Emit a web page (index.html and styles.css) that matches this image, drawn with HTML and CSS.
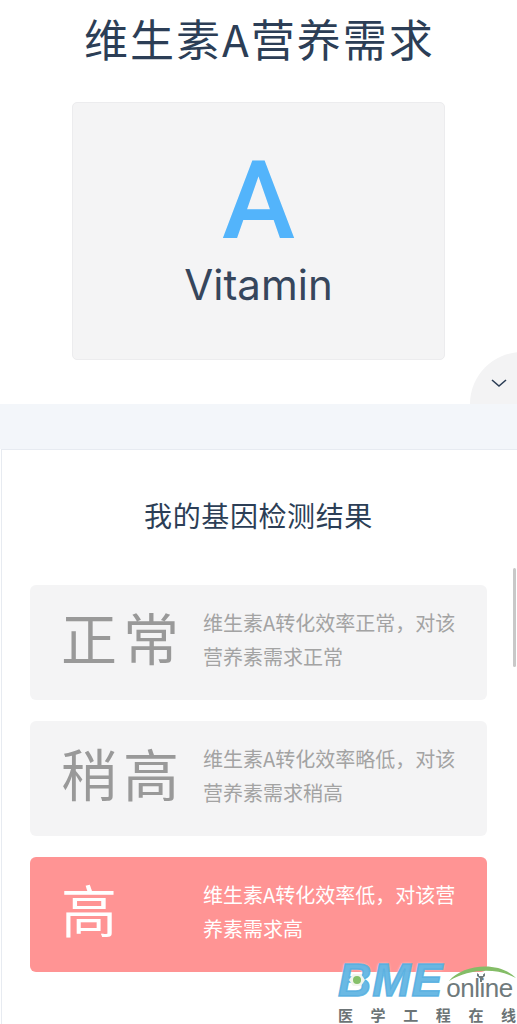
FILE: index.html
```html
<!DOCTYPE html>
<html lang="zh">
<head>
<meta charset="utf-8">
<title>维生素A营养需求</title>
<link rel="stylesheet" href="styles.css">
</head>
<body>
<div class="page">
  <section class="top">
    <h1 class="title">维生素A营养需求</h1>
    <div class="poster">
      <div class="poster-a">A</div>
      <div class="poster-name">Vitamin</div>
    </div>
    <div class="toggle">
      <svg class="chevron" width="16" height="9" viewBox="0 0 16 9"><path d="M1 1l7 6 7-6" fill="none" stroke="#2c3e56" stroke-width="1.6"/></svg>
    </div>
  </section>
  <div class="band"></div>
  <section class="panel">
    <h2 class="panel-title">我的基因检测结果</h2>
    <div class="card">
      <div class="card-label">正常</div>
      <p class="card-text">维生素A转化效率正常，对该营养素需求正常</p>
    </div>
    <div class="card">
      <div class="card-label">稍高</div>
      <p class="card-text">维生素A转化效率略低，对该营养素需求稍高</p>
    </div>
    <div class="card card-on">
      <div class="card-label">高</div>
      <p class="card-text">维生素A转化效率低，对该营养素需求高</p>
    </div>
  </section>
  <div class="scrollbar"></div>
  <div class="logo">
    <svg class="logo-arc" width="70" height="20" viewBox="0 0 70 20"><path d="M1 18C14 2 50 -3 68 15C50 5 22 5 1 18Z" fill="#84bd67"/></svg>
    <div class="logo-main">
      <span class="logo-bme">BME</span>
      <svg class="logo-eye" width="16" height="14" viewBox="0 0 16 14"><path d="M4 1h8l4 6-4 6H4L0 7z" fill="#f2f5ee"/><circle cx="8" cy="7" r="4" fill="#86c06a"/></svg>
      <span class="logo-online">online</span>
      <svg class="logo-wrench" width="10" height="9" viewBox="0 0 10 9"><path d="M1 0v3l3 2.5V9h2V5.500L9 3V0L7 1.500V3H3V1.500z" fill="#6f7a7c"/></svg>
    </div>
    <div class="logo-cn"><span>医</span><span>学</span><span>工</span><span>程</span><span>在</span><span>线</span></div>
  </div>
</div>
</body>
</html>
```

FILE: styles.css
```css
* { box-sizing: border-box; }
html, body { margin: 0; padding: 0; }
body {
  background: #fff;
  font-family: "Noto Sans CJK SC", "Noto Sans", sans-serif;
  overflow: hidden;
}
.page {
  position: relative;
  width: 517px;
  height: 1024px;
  overflow: hidden;
  background: #fff;
}
.top {
  position: relative;
  height: 404px;
  padding-top: 6px;
}
.title {
  margin: 0;
  height: 64px;
  padding-left: 2px;
  font-size: 44px;
  line-height: 64px;
  font-weight: 400;
  letter-spacing: 2px;
  text-align: center;
  color: #2c3e56;
}
.poster {
  width: 373px;
  height: 258px;
  margin: 32px 0 0 72px;
  background: #f4f4f5;
  border: 1px solid #ececee;
  border-radius: 5px;
  display: flex;
  flex-direction: column;
  align-items: center;
}
.poster-a {
  margin-top: 39px;
  height: 118px;
  font-family: "Roboto", sans-serif;
  font-size: 110px;
  line-height: 118px;
  font-weight: 500;
  color: #53b4fb;
}
.poster-name {
  margin-top: 0;
  font-family: "Inter", sans-serif;
  font-size: 42px;
  line-height: 50px;
  color: #36465c;
}
.toggle {
  position: absolute;
  right: -24px;
  bottom: 0;
  width: 71px;
  height: 52px;
  background: #f3f3f4;
  border-radius: 52px 0 0 0;
}
.chevron { position: absolute; left: 21px; top: 27px; }
.band { height: 45px; background: #f3f6fa; }
.panel {
  height: 575px;
  margin-left: 1px;
  padding: 45px 30px 0 28px;
  background: #fff;
  border-top: 1px solid #e7ebf1;
  border-left: 1px solid #e7ebf1;
}
.panel-title {
  margin: 0 0 49px;
  height: 41px;
  font-size: 28px;
  line-height: 41px;
  font-weight: 400;
  letter-spacing: 0.6px;
  text-align: center;
  color: #2c3e56;
}
.card {
  display: flex;
  align-items: center;
  height: 115px;
  margin-bottom: 21px;
  background: #f4f4f5;
  border-radius: 6px;
  color: #999;
}
.card-label {
  width: 173px;
  flex: none;
  padding: 0 0 13px 31px;
  font-size: 56px;
  line-height: 70px;
  letter-spacing: 6px;
  white-space: nowrap;
}
.card-text {
  margin: 0;
  width: 262px;
  padding-bottom: 5px;
  font-size: 20px;
  line-height: 34px;
  color: #a3a3a3;
}
.card-on { background: #ff9494; color: #fff; }
.card-on .card-text { color: #fff; }
.scrollbar {
  position: absolute;
  left: 513px;
  top: 568px;
  width: 3px;
  height: 99px;
  background: #c8c8c8;
  border-radius: 2px;
}
.logo {
  position: absolute;
  left: 338px;
  top: 960px;
  width: 179px;
  height: 62px;
}
.logo-arc { position: absolute; left: 110px; top: 3px; }
.logo-main { display: flex; align-items: flex-end; position: relative; height: 40px; }
.logo-bme {
  font-family: "Liberation Sans", sans-serif;
  font-size: 46px;
  line-height: 40px;
  font-weight: 700;
  font-style: italic;
  letter-spacing: 1px;
  color: rgba(85, 175, 225, 0.9);
  -webkit-text-stroke: 1.5px rgba(85, 175, 225, 0.9);
  text-shadow: 0 0 3px rgba(255, 255, 255, 0.9);
}
.logo-eye { position: absolute; left: 11px; top: 13px; }
.logo-online {
  margin: 0 0 -2px 3px;
  font-family: "Liberation Sans", sans-serif;
  font-size: 26px;
  line-height: 28px;
  letter-spacing: -0.5px;
  color: #6f7a7c;
}
.logo-wrench { position: absolute; left: 138px; top: 13px; }
.logo-cn {
  display: flex;
  justify-content: space-between;
  width: 178px;
  margin-top: 6px;
  font-size: 15px;
  line-height: 17px;
  font-weight: 700;
  color: #6c7476;
}
```
